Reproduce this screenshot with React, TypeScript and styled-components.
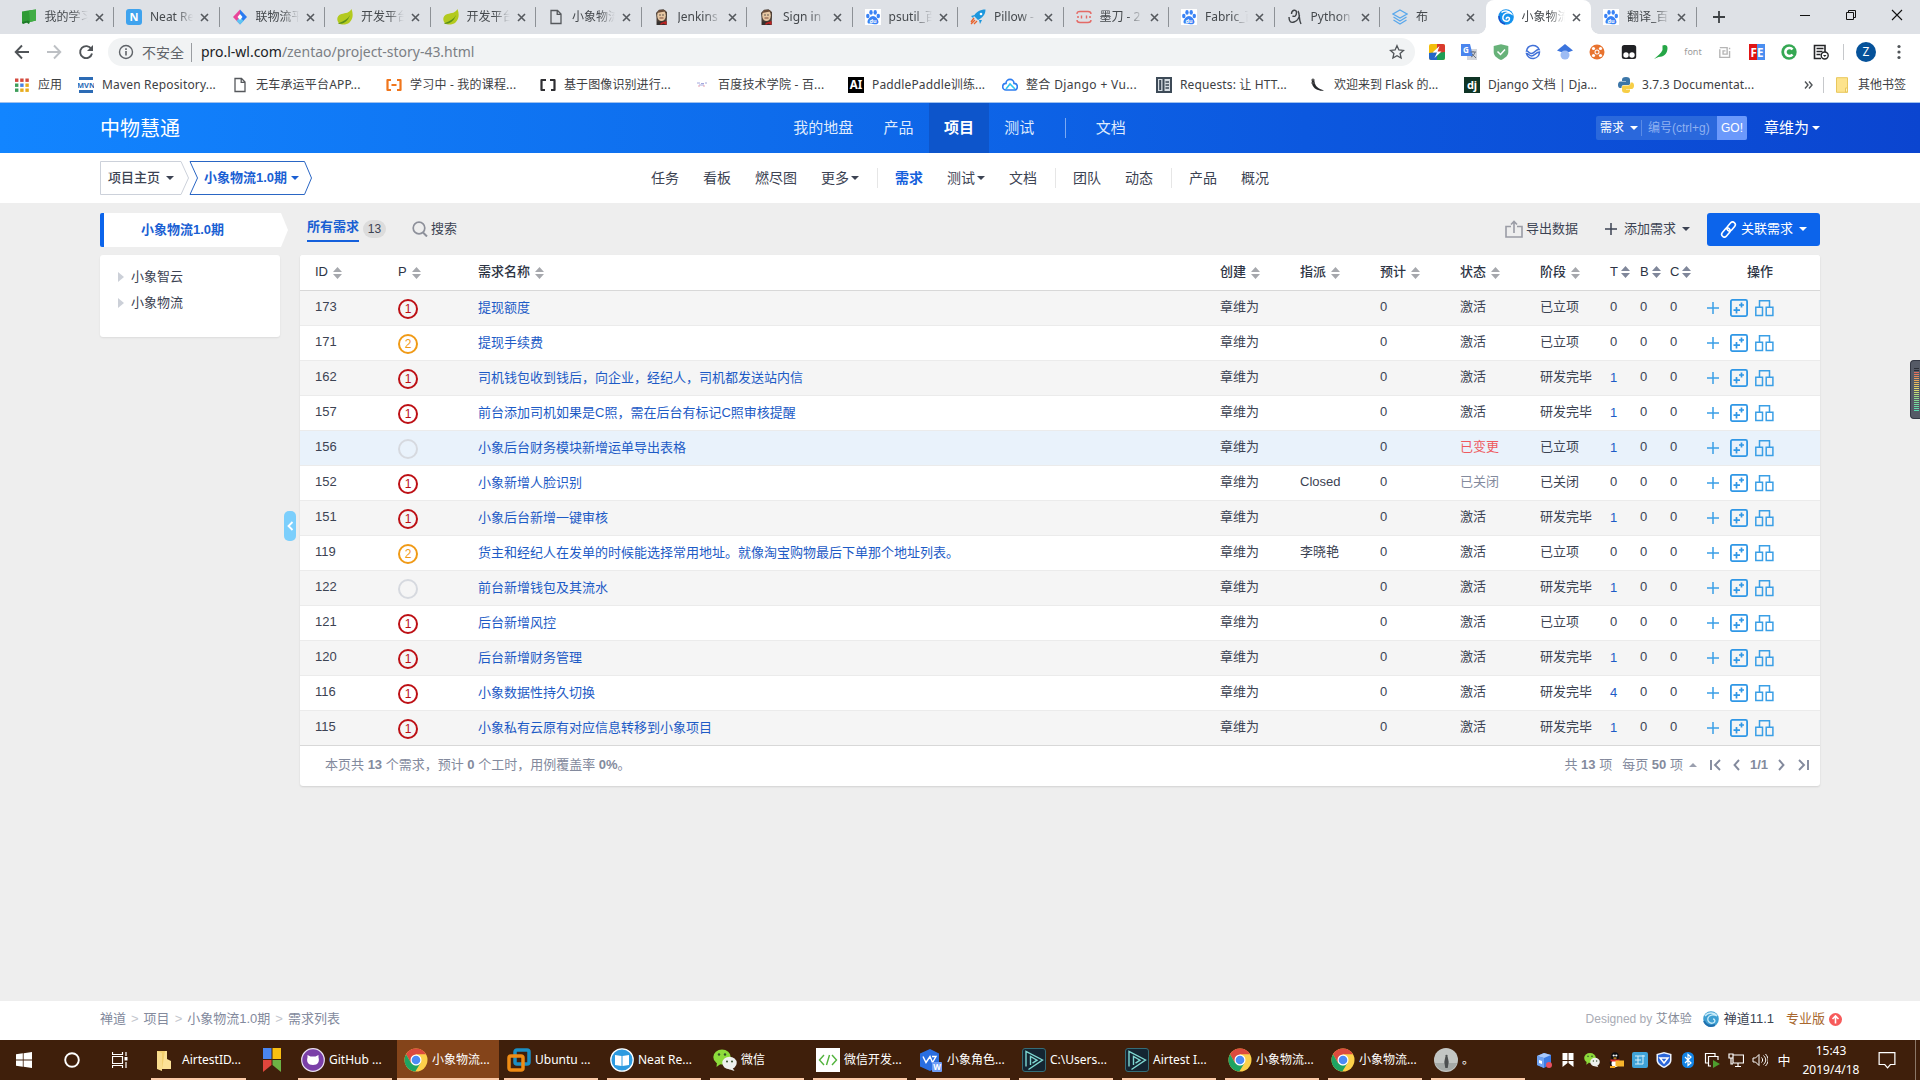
import React from "react";
import styled, { createGlobalStyle, css } from "styled-components";

const APP_FONT = `"Liberation Sans", "Noto Sans CJK SC", sans-serif`;
const UI_FONT = `"Noto Sans", "Noto Sans CJK SC", sans-serif`;

const Global = createGlobalStyle`
  * { box-sizing: border-box; }
  html, body { margin: 0; padding: 0; background: #eeeeee; }
  body { width: 1920px; height: 1080px; overflow: hidden; font: 13px/20px ${APP_FONT}; color: #3c4353; }
`;

const Screen = styled.div`
  position: relative;
  width: 1920px;
  height: 1080px;
  display: flex;
  flex-direction: column;
  background: #eeeeee;
`;

/* ---------- shared bits ---------- */
const Caret = styled.i<{ $up?: boolean; $c?: string; $ml?: number }>`
  flex: none;
  width: 0;
  height: 0;
  margin-left: ${(p) => p.$ml ?? 6}px;
  border: 4px solid transparent;
  ${(p) => (p.$up ? "border-top-width: 0; border-bottom-color:" : "border-bottom-width: 0; border-top-color:")}
    ${(p) => p.$c ?? "#3c4353"};
`;
const Drawing = styled.svg<{ $m?: string }>`
  display: block;
  flex: none;
  margin: ${(p) => p.$m ?? "0"};
`;

/* ---------- browser tabs ---------- */
const TabStrip = styled.div`
  flex: none;
  height: 34px;
  display: flex;
  background: #dee1e6;
  padding-left: 8.5px;
  font: 12px/18px ${UI_FONT};
  color: #45494d;
`;
const Tab = styled.div<{ $active?: boolean; $sep: boolean }>`
  position: relative;
  flex: none;
  width: 105.5px;
  height: 34px;
  display: flex;
  align-items: center;
  padding: 0 9px 0 12px;
  background: ${(p) => (p.$active ? "#fff" : "transparent")};
  border-radius: 8px 8px 0 0;
  ${(p) =>
    p.$sep &&
    css`
      background: linear-gradient(#8d9196, #8d9196) right center / 1px 20px no-repeat;
    `}
  ${(p) =>
    p.$active &&
    css`
      &::before,
      &::after {
        content: "";
        position: absolute;
        bottom: 0;
        width: 8px;
        height: 8px;
      }
      &::before {
        left: -8px;
        background: radial-gradient(circle at 0 0, transparent 7.5px, #fff 8px);
      }
      &::after {
        right: -8px;
        background: radial-gradient(circle at 100% 0, transparent 7.5px, #fff 8px);
      }
    `}
`;
const TabTitle = styled.span`
  width: 44px;
  margin-left: 8px;
  overflow: hidden;
  white-space: nowrap;
  mask-image: linear-gradient(to right, #000 60%, transparent 98%);
`;
const TabClose = styled.span`
  margin-left: 6px;
`;
const NewTab = styled.div`
  flex: none;
  width: 45px;
  display: flex;
  align-items: center;
  justify-content: center;
`;
const WindowButtons = styled.div`
  margin-left: auto;
  display: flex;
  align-items: center;
  gap: 34px;
  padding: 0 17px 5px 0;
`;

/* ---------- browser toolbar ---------- */
const Toolbar = styled.div`
  flex: none;
  height: 36px;
  display: flex;
  align-items: center;
  padding-left: 14px;
  background: #fff;
`;
const NavButtons = styled.div`
  display: flex;
  gap: 16px;
  width: 94px;
`;
const Omnibox = styled.div`
  width: 1307px;
  height: 28px;
  border-radius: 14px;
  background: #f1f3f4;
  display: flex;
  align-items: center;
  padding: 0 10px;
  font: 14px/20px ${UI_FONT};
  color: #5f6368;
`;
const Security = styled.span`
  margin-left: 8px;
  padding-right: 7px;
  border-right: 1px solid #9a9da1;
  line-height: 19px;
`;
const Url = styled.span`
  margin-left: 9px;
  padding-bottom: 1px;
  flex: 1;
  letter-spacing: -0.02px;
  color: #7c8085;
  b { font-weight: 400; color: #202124; }
`;
const Extensions = styled.div`
  display: flex;
  margin-left: 6px;
`;
const Extension = styled.div`
  width: 32px;
  height: 20px;
  display: flex;
  align-items: center;
  justify-content: center;
  font: 9px/12px ${UI_FONT};
  color: #9b9b9b;
`;
const Profile = styled.div`
  width: 20px;
  height: 20px;
  margin: 0 21px 0 12px;
  border-radius: 50%;
  background: #05529a;
  color: #fff;
  font: 12px/20px ${UI_FONT};
  text-align: center;
`;
const VLine = styled.i<{ $h: number; $c: string; $m?: string }>`
  flex: none;
  width: 1px;
  height: ${(p) => p.$h}px;
  background: ${(p) => p.$c};
  margin: ${(p) => p.$m ?? "0"};
`;

/* ---------- bookmarks ---------- */
const Bookmarks = styled.div`
  flex: none;
  height: 33px;
  display: flex;
  align-items: center;
  padding: 0 14px 3px 14px;
  background: #fff;
  border-bottom: 1px solid #9fc1ee;
  font: 12px/18px ${UI_FONT};
  color: #3d4043;
`;
const Bookmark = styled.div<{ $w?: number }>`
  flex: none;
  width: ${(p) => (p.$w ? `${p.$w}px` : "auto")};
  display: flex;
  align-items: center;
  gap: 8px;
  white-space: nowrap;
`;
const BookmarkText = styled.span<{ $ls?: number }>`
  letter-spacing: ${(p) => p.$ls ?? 0}px;
`;

/* ---------- app header ---------- */
const Header = styled.header`
  flex: none;
  height: 50px;
  display: flex;
  align-items: center;
  padding: 0 100px;
  background: linear-gradient(to right, #1285ff 0%, #0e6cec 40%, #0c58df 68%, #0b45d0 100%);
  color: #fff;
`;
const Brand = styled.div`
  width: 678px;
  padding-top: 1px;
  font-size: 20px;
  line-height: 28px;
`;
const MainNav = styled.nav`
  display: flex;
  align-items: center;
`;
const MainNavItem = styled.a<{ $active?: boolean }>`
  height: 50px;
  padding: 0 15.2px;
  font-size: 15px;
  line-height: 49px;
  color: ${(p) => (p.$active ? "#fff" : "#dfeafd")};
  font-weight: ${(p) => (p.$active ? 700 : 400)};
  background: ${(p) => (p.$active ? "#0d55cb" : "transparent")};
`;
const QuickSearch = styled.div`
  margin-left: auto;
  width: 151px;
  height: 24px;
  flex: none;
  display: flex;
  align-items: center;
  border-radius: 2px;
  overflow: hidden;
  background: #2a68dc;
  font-size: 12px;
  padding-left: 4px;
  white-space: nowrap;
`;
const QuickInput = styled.span`
  flex: 1;
  padding-left: 6px;
  color: #8fb1f1;
`;
const GoButton = styled.span`
  width: 30px;
  height: 24px;
  line-height: 25px;
  text-align: center;
  background: #6b99fb;
`;
const User = styled.div`
  margin-left: 17px;
  display: flex;
  align-items: center;
  font-size: 15px;
`;

/* ---------- sub header ---------- */
const SubHeader = styled.div`
  flex: none;
  height: 50px;
  display: flex;
  align-items: center;
  padding-left: 100px;
  background: #fff;
`;
const Crumbs = styled.div`
  display: flex;
  width: 539px;
`;
const Crumb = styled.div<{ $w: number; $pad: number; $active?: boolean }>`
  position: relative;
  width: ${(p) => p.$w}px;
  height: 34px;
  display: flex;
  align-items: center;
  padding: 0 0 1px ${(p) => p.$pad}px;
  font-weight: ${(p) => (p.$active ? 700 : 500)};
  color: ${(p) => (p.$active ? "#1a5fd3" : "#3c4353")};
  svg { position: absolute; left: 0; top: 0; }
`;
const SubNav = styled.nav`
  display: flex;
  align-items: center;
`;
const SubNavItem = styled.a<{ $active?: boolean }>`
  display: flex;
  align-items: center;
  padding: 0 12px;
  font-size: 14px;
  font-weight: ${(p) => (p.$active ? 700 : 400)};
  color: ${(p) => (p.$active ? "#1460dc" : "#3c4353")};
`;

/* ---------- body ---------- */
const Body = styled.div`
  flex: 1;
  display: flex;
  padding: 10px 100px 0;
`;
const Sidebar = styled.aside`
  position: relative;
  width: 200px;
  flex: none;
`;
const SideTitle = styled.div`
  width: 188px;
  height: 34px;
  margin-bottom: 8px;
  border-left: 4px solid #0c64eb;
  border-radius: 2px 0 0 2px;
  background: #fff;
  clip-path: polygon(0 0, 181px 0, 188px 17px, 181px 34px, 0 34px);
  padding-right: 27px;
  text-align: center;
  font-weight: 700;
  line-height: 33px;
  color: #1a5fd3;
`;
const SidePanel = styled.div`
  width: 180px;
  height: 82px;
  padding: 9px 18px;
  border-radius: 3px;
  background: #fff;
  box-shadow: 0 1px 2px rgba(0, 0, 0, 0.08);
`;
const TreeItem = styled.div`
  height: 26px;
  display: flex;
  align-items: center;
  line-height: 20px;
  &::before {
    content: "";
    border: 5px solid transparent;
    border-right-width: 0;
    border-left-width: 6px;
    border-left-color: #ccd0d8;
    margin-right: 7px;
  }
`;
const Toggle = styled.div`
  position: absolute;
  left: 184px;
  top: 298px;
  width: 12px;
  height: 30px;
  border-radius: 5px;
  background: #7ccffc;
  display: flex;
  align-items: center;
  justify-content: center;
`;
const Main = styled.main`
  width: 1520px;
  flex: none;
`;
const Actions = styled.div`
  height: 42px;
  display: flex;
  align-items: flex-start;
  padding-left: 7px;
`;
const AllTab = styled.div`
  height: 29px;
  border-bottom: 2px solid #1460dc;
  font-weight: 700;
  line-height: 28px;
  color: #1a5fd3;
`;
const Count = styled.span`
  margin: 7px 26px 0 4px;
  width: 23px;
  height: 18px;
  border-radius: 9px;
  background: #dcdcdc;
  font-size: 12px;
  line-height: 18px;
  text-align: center;
`;
const Action = styled.div<{ $gap: number; $mr?: number }>`
  height: 32px;
  display: flex;
  align-items: center;
  gap: ${(p) => p.$gap}px;
  margin-right: ${(p) => p.$mr ?? 0}px;
`;
const Spacer = styled.div`
  flex: 1;
`;
const Primary = styled.div`
  width: 113px;
  height: 33px;
  display: flex;
  align-items: center;
  padding: 0 0 1px 13px;
  gap: 4px;
  border-radius: 3px;
  background: #0c64eb;
  color: #fff;
`;

/* ---------- table ---------- */
const Table = styled.div`
  background: #fff;
  border-radius: 3px;
  box-shadow: 0 1px 2px rgba(0, 0, 0, 0.12);
`;
const Row = styled.div<{ $head?: boolean; $bg?: string }>`
  height: ${(p) => (p.$head ? 36 : 35)}px;
  display: grid;
  grid-template-columns: 83px 80px 742px repeat(4, 80px) 70px 30px 30px 37px 1fr;
  align-items: center;
  padding: 0 0 ${(p) => (p.$head ? 1 : 2)}px 15px;
  background: ${(p) => p.$bg ?? "#fff"};
  border-radius: ${(p) => (p.$head ? "3px 3px 0 0" : "0")};
  border-bottom: 1px solid ${(p) => (p.$head ? "#d8d8d8" : "#ebebeb")};
  font-weight: ${(p) => (p.$head ? 500 : 400)};
  color: ${(p) => (p.$head ? "#2d3444" : "#3c4353")};
  &:last-of-type { border-bottom-color: #d8d8d8; }
`;
const Cell = styled.div<{ $c?: string; $down?: number }>`
  display: flex;
  align-items: center;
  white-space: nowrap;
  padding-top: ${(p) => (p.$down ?? 0) * 2}px;
  color: ${(p) => p.$c ?? "inherit"};
`;
const Title = styled.a`
  display: block;
  padding-top: 2px;
  white-space: nowrap;
  color: #1d5bc6;
`;
const Pri = styled.span<{ $c: string }>`
  width: 20px;
  height: 20px;
  margin-top: 4px;
  border: 2px solid ${(p) => p.$c};
  border-radius: 50%;
  color: ${(p) => p.$c};
  font-size: 12px;
  line-height: 16px;
  text-align: center;
`;
const Ops = styled.div`
  display: flex;
  align-items: center;
  padding-top: 2px;
`;
const OpsHead = styled.div`
  padding-left: 40px;
`;
const TableFoot = styled.div`
  height: 40px;
  display: flex;
  align-items: center;
  padding: 0 11px 2px 25px;
  color: #838a9d;
  white-space: pre;
  b { font-weight: 700; }
`;
const Pager = styled.div`
  margin-left: auto;
  display: flex;
  align-items: center;
`;
const PageSize = styled.span`
  margin-left: 10px;
`;

/* ---------- page footer ---------- */
const PageFooter = styled.footer`
  flex: none;
  height: 39px;
  display: flex;
  align-items: center;
  padding: 0 78px 3px 100px;
  background: #fff;
  color: #838a9d;
`;
const Arrow = styled.span`
  width: 17.6px;
  text-align: center;
  color: #c3c6cd;
`;
const Designed = styled.span`
  margin-left: auto;
  margin-right: 11px;
  font-size: 12px;
  color: #a9acb5;
  i { font-style: normal; color: #868b98; }
`;
const Version = styled.span`
  margin: 0 12px 0 5px;
  color: #3c4353;
`;
const Pro = styled.span`
  margin-right: 4px;
  color: #a8672e;
`;

/* ---------- taskbar ---------- */
const Taskbar = styled.div`
  flex: none;
  height: 40px;
  display: flex;
  background: #3f1f0b;
  color: #fff;
  font: 12px/18px ${UI_FONT};
`;
const SystemButton = styled.div<{ $mr?: number }>`
  flex: none;
  width: 48px;
  margin-right: ${(p) => p.$mr ?? 0}px;
  display: flex;
  align-items: center;
  justify-content: center;
`;
const Task = styled.div<{ $w: number; $mr: number; $active?: boolean; $plain?: boolean }>`
  flex: none;
  width: ${(p) => p.$w}px;
  margin-right: ${(p) => p.$mr}px;
  height: 40px;
  display: flex;
  align-items: center;
  gap: 4px;
  padding: ${(p) => (p.$active ? "2px 0 0 7px" : "2px 0 0 3px")};
  border-bottom: 2px solid ${(p) => (p.$plain ? "transparent" : "#fbcaa8")};
  background: ${(p) => (p.$active ? "#84441a" : "transparent")};
  background-clip: padding-box;
  white-space: nowrap;
`;
const Tray = styled.div`
  margin-left: auto;
  display: flex;
  align-items: center;
`;
const TrayIcon = styled.div`
  width: 24px;
  display: flex;
  justify-content: center;
  font-size: 13px;
`;
const Clock = styled.div`
  width: 70px;
  height: 40px;
  padding-top: 1px;
  line-height: 19px;
  text-align: center;
`;
const Meter = styled.div`
  position: absolute;
  right: 0;
  top: 360px;
  width: 10px;
  height: 59px;
  padding: 7px 1px 7px 3px;
  border-radius: 4px 0 0 4px;
  border: 1px solid #343844;
  border-right: 0;
  background: #555a66;
  i {
    display: block;
    height: 100%;
    background: repeating-linear-gradient(to bottom, transparent 0 1px, #555a66 1px 2px),
      linear-gradient(#2b2e36 0 8%, #e2665c 9%, #e9a659 28%, #e2dc6b 50%, #8fd98a 70%, #56dcb0 100%);
  }
`;

/* ---------- icons ---------- */
const Svg = ({ s = 16, w, h, vb, m, children }: any) => (
  <Drawing width={w ?? s} height={h ?? s} viewBox={vb ?? "0 0 16 16"} fill="none" $m={m}>
    {children}
  </Drawing>
);
const T = ({ x = 8, y, size, fill = "#fff", children, b }: any) => (
  <text x={x} y={y} fontSize={size} fill={fill} textAnchor="middle" fontWeight={b ? 700 : 400} fontFamily="Noto Sans">
    {children}
  </text>
);
const Cross = () => (
  <Svg s={9} vb="0 0 9 9"><path d="M1 1l7 7M8 1l-7 7" stroke="#55595e" strokeWidth="1.6" /></Svg>
);
const Doc = () => (
  <Svg><path d="M3 1.5h6.5L13 5v9.5H3zM9.2 1.5V5.3H13" stroke="#55585c" strokeWidth="1.3" /></Svg>
);
const Leaf = () => (
  <Svg><path d="M14.500 0c2 5 1.500 10-2 13.500-3 2.500-8 2.500-10.500 1C-1 11 0 6 4.500 5c4-1 8-1 10-5z" fill="#b3ca1f" /><path d="M1 15c6 0 10-3 12-9-2 4-6 6-11 8z" fill="#5a8f1a" /></Svg>
);
const Butler = () => (
  <Svg><path d="M2.500 16V9L2 4 5 .8 9.500.3 13 3v5l-.5 8z" fill="#4c4038" /><ellipse cx="7.500" cy="6.500" rx="4.300" ry="5.500" fill="#e6c6a2" /><path d="M2.500 4l3-3H11l2 5-2-3.500z" fill="#6b4c38" /><circle cx="6" cy="6" r=".7" fill="#333" /><circle cx="9" cy="6" r=".7" fill="#333" /><path d="M5.500 9h4" stroke="#7c4a3a" /><path d="M3 12.500h9.500V16H3z" fill="#35312f" /><path d="M6.500 14l3-1 3-1v4l-3-1.500-3 1.500z" fill="#c32222" /></Svg>
);
const Paw = () => (
  <Svg><path d="M0 0h16v16H0z" fill="#fff" /><g fill="#3a83f5"><ellipse cx="2.8" cy="7" rx="1.7" ry="2.2" /><ellipse cx="6" cy="3.400" rx="1.700" ry="2.300" /><ellipse cx="10.200" cy="3.400" rx="1.700" ry="2.300" /><ellipse cx="13.300" cy="7" rx="1.700" ry="2.200" /><path d="M8 7c2.500 0 5.500 3.500 5.500 6S10.500 15.500 8 15s-5.500.500-5.500-2S5.500 7 8 7z" /></g><T y="14" size="5.5" b>du</T></Svg>
);
const Swirl = () => (
  <Svg><circle cx="8" cy="8" r="7.800" fill="#1593ee" /><path d="M3.500 3.500C6 1 11 1.500 13 4.500c-3-1.500-7-.5-8 3s2 5.500 5 4.500c2-1 2-3.500 0-3.700-1.500 0-2 1-1.500 2" stroke="#fff" strokeWidth="1.500" /><path d="M1 7c0 4 2 7 6 8" stroke="#1f4ec8" strokeWidth="1.500" /></Svg>
);
const Chrome = () => (
  <Svg s={24} vb="0 0 24 24"><circle cx="12" cy="12" r="11.500" fill="#fcd04a" /><path d="M2 6.300A11.500 11.500 0 0 1 22 6.300H12L7 15z" fill="#dc4b3e" /><path d="M2 6.300a11.500 11.500 0 0 0 9.300 17.200L16.500 15 12 17.500 7 15z" fill="#1ea362" /><circle cx="12" cy="12" r="5.500" fill="#fff" /><circle cx="12" cy="12" r="4.300" fill="#4c8bf5" /></Svg>
);
const Wechat = ({ s = 24 }: { s?: number }) => (
  <Svg s={s} vb="0 0 24 24"><ellipse cx="9" cy="9" rx="8.700" ry="7.500" fill="#8ddb3b" /><path d="M4 14l-.500 5 4-3z" fill="#8ddb3b" /><ellipse cx="16.500" cy="15" rx="7.200" ry="6.200" fill="#eef0ee" /><path d="M19 19l2.500 4-6-2z" fill="#eef0ee" /><g fill="#35502a"><circle cx="6" cy="6.500" r="1.200" /><circle cx="12" cy="6.500" r="1.200" /><circle cx="14" cy="13.500" r="1" /><circle cx="19" cy="13.500" r="1" /></g></Svg>
);
const AirtestIcon = () => (
  <Svg s={24} vb="0 0 24 24"><rect x=".5" y=".5" width="23" height="23" rx="2.500" fill="#142532" stroke="#356d78" /><path d="M6.500 21.500L20.500 12 4 3.500v15M8.500 17V8.500l6.500 3.700-4.500 3" stroke="#7fd8d2" strokeWidth="1.400" /></Svg>
);

const favicons: Record<string, React.ReactNode> = {
  note: <Svg><path d="M1 2.500l6-1 8-1v11l-6 1.500-1 2-2-1.500-5 1z" fill="#2f9b35" /><path d="M8 1.500l7-1v11l-6 1.500z" fill="#41ad45" /><path d="M1 13l6-1.500 1.500 1L7.500 15l-1.500-1.500-4 1.500z" fill="#1e7a28" /></Svg>,
  n: <Svg><rect width="16" height="16" rx="3" fill="#3fa3ee" /><T y="12" size="11" b>N</T></Svg>,
  gem: <Svg><path d="M8 .5L15 8l-7 7.500z" fill="#2a7af0" /><path d="M8 .5L1 8l7 7.500z" fill="#e8459a" /><path d="M8 8l3.500 4L8 15.500 4.500 12z" fill="#5fc4f2" /><path d="M8 5l2.500 3L8 11 5.500 8z" fill="#fff" /></Svg>,
  leaf: <Leaf />,
  doc: <Doc />,
  butler: <Butler />,
  paw: <Paw />,
  rocket: <Svg><path d="M15.500.5C10 .5 6 3 4 7l4 4c4-2 7.500-5 7.500-10.500zM4.500 6L1 7l2 2zM9 11l1 4 2-4z" fill="#1d97dd" /><path d="M4 9l-3 4M5 11l-4 4M7 12l-3 3" stroke="#e9622b" strokeWidth="1.300" /><circle cx="11" cy="5" r="1.300" fill="#fff" /></Svg>,
  modao: <Svg><path d="M1 5c0-2 1-2.500 3-2.500h8c2 0 3 .5 3 2.500M1 11c0 2 1 2.500 3 2.500h8c2 0 3-.5 3-2.500M5.500 6.500v3M10.500 6.500v3M1 8h2M13 8h2" stroke="#e46a66" strokeWidth="1.400" /></Svg>,
  python: <Svg><path d="M4.500 5c0-4.500 5-5 5-1.500s-2 4.500-4 3.500M11 2c2 3 .5 8 3 13M2 8c0 5 2 6 5 5s5-4 5.500-7" stroke="#3f4347" strokeWidth="1.400" /></Svg>,
  layers: <Svg><path d="M8 1l7 4-7 4-7-4zM1.500 8L8 12l6.500-4M1.500 11L8 15l6.500-4" stroke="#5aa8ec" strokeWidth="1.300" /></Svg>,
  swirl: <Swirl />,
};

const tabs: [string, string][] = [
  ["note", "我的学习"], ["n", "Neat Rea"], ["gem", "联物流平"], ["leaf", "开发平台"], ["leaf", "开发平台"],
  ["doc", "小象物流"], ["butler", "Jenkins"], ["butler", "Sign in"], ["paw", "psutil_百"], ["rocket", "Pillow -"],
  ["modao", "墨刀 - 2"], ["paw", "Fabric_百"], ["python", "Python"], ["layers", "布"], ["swirl", "小象物流"], ["paw", "翻译_百"],
];

const extensionIcons: React.ReactNode[] = [
  <Svg><rect width="16" height="16" rx="2" fill="#f3be0b" /><path d="M8 0h6a2 2 0 0 1 2 2v7H8z" fill="#d93a2e" /><path d="M16 8v6a2 2 0 0 1-2 2H7V9z" fill="#1f9d55" /><path d="M8 16H2a2 2 0 0 1-2-2V9l8-1z" fill="#2566c8" /><path d="M10.500 2L3.500 8.500H8L5.500 14l7-6.500H8.500z" fill="#fff" /></Svg>,
  <Svg><rect x="6" y="5" width="10" height="11" fill="#d3d6db" /><path d="M0 0h9l3 12H0z" fill="#4a85ee" /><T x="5" y="9" size="8" b>G</T><path d="M9.500 8h5.500M12 7v1M14 8c-1 3-2 4-4 5M11 10l4 4" stroke="#6a7280" /></Svg>,
  <Svg><path d="M8 .3L15.300 2v6c0 4-4 6.500-7.300 8C4.500 14.500.7 12 .7 8V2z" fill="#67b279" /><path d="M4.500 7.500l3 3 4.500-5" stroke="#fff" strokeWidth="1.500" /></Svg>,
  <Svg><path d="M1.500 7a6.600 6.600 0 0 1 12.600-1.500C10.500 5 9.500 10 6 9.500 4 9.300 3.500 7 1.500 7z" stroke="#4070d8" strokeWidth="1.500" /><path d="M1.500 9.500a6.600 6.600 0 0 0 13-1.500c-3.500 0-5 4-8 4-2 0-3-2.500-5-2.500z" stroke="#4070d8" strokeWidth="1.500" /></Svg>,
  <Svg><path d="M8 0l8 6.500-4 1.500H4L0 6.500z" fill="#3b74dd" /><circle cx="8" cy="11" r="4.500" fill="#9dbcf4" /></Svg>,
  <Svg><circle cx="8" cy="8" r="7.500" fill="#e8732f" /><circle cx="8" cy="8" r="2.500" fill="#fff" /><g fill="#fff"><circle cx="4.500" cy="4.500" r="1.600" /><circle cx="11.500" cy="4.500" r="1.600" /><circle cx="4.500" cy="11.500" r="1.600" /><circle cx="11.500" cy="11.500" r="1.600" /></g><circle cx="8" cy="8" r="1.500" fill="#e8732f" /></Svg>,
  <Svg><rect x=".8" y="1" width="14.400" height="14" rx="2.500" fill="#202124" /><circle cx="5" cy="11" r="2.700" fill="#fff" /><circle cx="11" cy="11" r="2.700" fill="#fff" /></Svg>,
  <Svg><path d="M9.500 1.500c3-1.500 5 0 5 2.500 0 6-4 9-9 9L1 15c3.500-3 7.500-6 8.500-9z" fill="#25a646" /></Svg>,
  "font",
  <Svg s={13}><path d="M1 2h9v8H5V6h3M13 2v2M13 6v8H1V4" stroke="#b5b5b5" strokeWidth="1.700" /></Svg>,
  <Svg><rect width="8" height="16" fill="#e01515" /><rect x="8" width="8" height="16" fill="#4a8ef0" /><T y="12.500" size="11.500" b>FE</T></Svg>,
  <Svg><circle cx="8" cy="8" r="7.700" fill="#35a853" /><path d="M11.500 5.500a4 4 0 1 0 0 5" stroke="#fff" strokeWidth="2.600" /></Svg>,
  <Svg><path d="M12 8V1.500H1.500v13H8M3.500 4.500h7M3.500 7.500h6M3.500 10.500h4" stroke="#252628" strokeWidth="1.600" /><circle cx="11.700" cy="11.500" r="3.500" fill="#fff" stroke="#252628" strokeWidth="1.400" /><path d="M10 11h3.500l-1.700 2z" fill="#252628" /></Svg>,
];

const bookmarks: [React.ReactNode, string, number, number?][] = [
  [<Svg><g>{["#d44a3e", "#d44a3e", "#d44a3e", "#3e9e5a", "#4a82e4", "#e8ac1e", "#3e9e5a", "#e8ac1e", "#e8ac1e"].map((c, i) => <rect key={i} x={1 + (i % 3) * 5.2} y={1.5 + Math.floor(i / 3) * 5} width="3.400" height="3.400" fill={c} />)}</g></Svg>, "应用", 64],
  [<Svg><path d="M1 0h14v3H1zM1 13h14v3H1z" fill="#2c6bb5" /><T y="11" size="7.5" fill="#2c6bb5" b>MVN</T></Svg>, "Maven Repository...", 154, 0.18],
  [<Doc />, "无车承运平台APP...", 154, 0.2],
  [<Svg><path d="M5 3H1.500v10H5M11 3h3.500v10H11M5.500 8h5" stroke="#f0761c" strokeWidth="2.200" strokeLinejoin="round" /></Svg>, "学习中 - 我的课程...", 154, 0.2],
  [<Svg><path d="M6 3H1.500v10H5M10 3h4.500v10H11" stroke="#2f2f33" strokeWidth="2.200" strokeLinejoin="round" /></Svg>, "基于图像识别进行...", 154, 0.1],
  [<Svg><path d="M3 6h3M7 6.500h3M11 6h2M5 8h5" stroke="#a4a8dd" /><path d="M4 9h2M9 9h2" stroke="#e8a4b4" /></Svg>, "百度技术学院 - 百...", 154, 0.2],
  [<Svg><path d="M0 0h16v16H0z" fill="#000" /><T y="12.300" size="11.500" b>AI</T></Svg>, "PaddlePaddle训练...", 154, 0.13],
  [<Svg><path d="M4 13a3.300 3.300 0 0 1 0-6.600 4 4 0 0 1 8 0 3.300 3.300 0 0 1 0 6.600z" stroke="#2e7df0" strokeWidth="1.600" /><path d="M4 12l4-5 5 5" stroke="#2ec5ee" strokeWidth="1.600" /></Svg>, "整合 Django + Vu...", 154, 0.35],
  [<Svg><path d="M0 0h16v16H0z" fill="#3d4a57" /><path d="M2 2h4.500v12H2zM8.500 2H14v12H8.500z" fill="#d6dde3" /><path d="M4.200 3v10" stroke="#3d4a57" strokeWidth="2" /><path d="M9.500 5H13M9.500 8H13M9.500 11H13" stroke="#3d4a57" strokeWidth="1.300" /></Svg>, "Requests: 让 HTT...", 154, 0.13],
  [<Svg><path d="M3 1c-3 4 0 11 5 12 3 1 4 1 6 .5-3-1-8-3-9-7C4.500 4 4 3 3 1z" fill="#26282b" /><path d="M1 3l4 0M1 6l4 0" stroke="#666" /></Svg>, "欢迎来到 Flask 的...", 154],
  [<Svg><path d="M0 0h16v16H0z" fill="#0f3425" /><T y="12" size="11" b>dj</T></Svg>, "Django 文档 | Dja...", 154],
  [<Svg><path d="M8 0c3 0 4 1 4 3v3.500c0 1-1 1.500-2 1.500H6C4 8 3.500 9 3.500 11H2C.5 11 0 9.500 0 8s.5-3.500 2.500-3.500H8V4H4V3c0-2 1-3 4-3z" fill="#3c76a8" /><path d="M8 16c-3 0-4-1-4-3V10c0-1 1-1.500 2-1.500h4c2 0 2.500-1 2.500-3H14c1.500 0 2 1.500 2 3s-.5 3.500-2.500 3.500H8v.5h4v1c0 2-1 2.500-4 2.500z" fill="#f7ce46" /></Svg>, "3.7.3 Documentat...", 154, 0.13],
];

/* ---------- data ---------- */
interface Story {
  id: number; pri: 0 | 1 | 2; title: string; to?: string; status?: string; stage: string; t: number;
}
const DONE = "研发完毕";
const OPEN = "已立项";
const stories: Story[] = [
  { id: 173, pri: 1, title: "提现额度", stage: OPEN, t: 0 },
  { id: 171, pri: 2, title: "提现手续费", stage: OPEN, t: 0 },
  { id: 162, pri: 1, title: "司机钱包收到钱后，向企业，经纪人，司机都发送站内信", stage: DONE, t: 1 },
  { id: 157, pri: 1, title: "前台添加司机如果是C照，需在后台有标记C照审核提醒", stage: DONE, t: 1 },
  { id: 156, pri: 0, title: "小象后台财务模块新增运单导出表格", status: "已变更", stage: OPEN, t: 1 },
  { id: 152, pri: 1, title: "小象新增人脸识别", to: "Closed", status: "已关闭", stage: "已关闭", t: 0 },
  { id: 151, pri: 1, title: "小象后台新增一键审核", stage: DONE, t: 1 },
  { id: 119, pri: 2, title: "货主和经纪人在发单的时候能选择常用地址。就像淘宝购物最后下单那个地址列表。", to: "李晓艳", stage: OPEN, t: 0 },
  { id: 122, pri: 0, title: "前台新增钱包及其流水", stage: DONE, t: 1 },
  { id: 121, pri: 1, title: "后台新增风控", stage: OPEN, t: 0 },
  { id: 120, pri: 1, title: "后台新增财务管理", stage: DONE, t: 1 },
  { id: 116, pri: 1, title: "小象数据性持久切换", stage: DONE, t: 4 },
  { id: 115, pri: 1, title: "小象私有云原有对应信息转移到小象项目", stage: DONE, t: 1 },
];
const priColor = ["#d6d9df", "#bd1015", "#f09a16"];
const statusColor: Record<string, string> = { 已变更: "#ee5a5f", 已关闭: "#838a9d" };

const Sort = ({ dark }: { dark?: boolean }) => (
  <Svg w={9} h={12} vb="0 0 9 12" m={dark ? "0 0 0 3px" : "1px 0 0 5px"}>
    <path d="M4.500 0L9 5H0zM4.500 12L0 7h9z" fill={dark ? "#80879a" : "#a6a8ad"} />
  </Svg>
);
const PlusIcon = ({ c, s = 12 }: { c: string; s?: number }) => (
  <Svg s={s} vb="0 0 12 12"><path d="M6 0v12M0 6h12" stroke={c} strokeWidth="1.500" /></Svg>
);
const RowOps = () => (
  <Ops>
    <PlusIcon c="#3a9fe6" />
    <Svg s={18} vb="0 0 18 18" m="0 0 0 11px">
      <rect x=".9" y=".9" width="16.200" height="16.200" rx="1.500" stroke="#2f97e6" strokeWidth="1.800" />
      <path d="M11.500 3.500v5M9 6h5M6.500 8v6.500M3.500 11.200H10" stroke="#2f97e6" strokeWidth="1.700" />
    </Svg>
    <Svg w={19} h={18} vb="0 0 19 18" m="0 0 0 7px">
      <path d="M4.500 8V1.700h10V8M.8 8.300h6.700v8.200H.8zM11.200 8.300h6.700v8.200h-6.700z" stroke="#3a9fe6" strokeWidth="1.500" />
    </Svg>
  </Ops>
);

const tasks: [React.ReactNode, string, number, number][] = [
  [<Svg s={24} vb="0 0 24 24"><path d="M3 3h8v18H3z" fill="#f2cf6f" /><path d="M11 3h2v8l4 2v8H8z" fill="#fbe196" /><path d="M3 3l5 2v18l-5-2z" fill="#f8dc8d" /></Svg>, "AirtestID...", 95, 11],
  [<Svg s={24} vb="0 0 24 24"><path d="M3 0h8.500v11H3z" fill="#4a86f0" /><path d="M12.500 0H21v11h-8.500z" fill="#f8bf12" /><path d="M3 12h8.500v5L3 24z" fill="#e0463c" /><path d="M12.500 12H21v12l-8.500-7z" fill="#6cb244" /></Svg>, "", 41, 0],
  [<Svg s={24} vb="0 0 24 24"><circle cx="12" cy="12" r="11.300" fill="#7b3fa8" stroke="#e9e0f2" strokeWidth="1.200" /><path d="M6.500 9.500V7l3 1.500h5l3-1.500v2.500c1.200 4-.5 7.500-5.500 7.500s-6.700-3.500-5.500-7.500z" fill="#fff" /></Svg>, "GitHub ...", 94, 5],
  [<Chrome />, "小象物流...", 102, 5],
  [<Svg s={24} vb="0 0 24 24"><rect x="8" y="2" width="14" height="14" rx="2" stroke="#1c8fc4" strokeWidth="3.500" /><rect x="2" y="8" width="14" height="14" rx="2" stroke="#f08c14" strokeWidth="3.500" /></Svg>, "Ubuntu ...", 94, 9],
  [<Svg s={24} vb="0 0 24 24"><circle cx="12" cy="12" r="11.200" fill="#2d9be0" stroke="#fff" strokeWidth="1.300" /><path d="M5 7l6.500 1v10L5 17zM12.500 8L19 7v10l-6.500 1z" fill="#fff" /></Svg>, "Neat Re...", 94, 9],
  [<Wechat />, "微信", 94, 9],
  [<Svg s={24} vb="0 0 24 24"><path d="M0 0h24v24H0z" fill="#fff" /><path d="M8 7l-4.500 5L8 17M16 7l4.500 5-4.500 5M13.500 7l-3 10" stroke="#52b33c" strokeWidth="1.400" /></Svg>, "微信开发...", 94, 9],
  [<Svg s={24} vb="0 0 24 24"><path d="M11 1l9 4.500v13L11 23l-10-4.500v-13z" fill="#2a6ee0" /><path d="M4 8.500l3 6 4-6 2.500 6 3.500-6h-4" stroke="#fff" strokeWidth="1.400" /><rect x="13" y="14" width="10" height="10" rx="1" fill="#6f9df5" /><T x="18" y="22" size="8" b>W</T></Svg>, "小象角色...", 94, 9],
  [<AirtestIcon />, "C:\\Users...", 94, 9],
  [<AirtestIcon />, "Airtest I...", 94, 9],
  [<Chrome />, "小象物流...", 94, 9],
  [<Chrome />, "小象物流...", 94, 9],
  [<Svg s={24} vb="0 0 24 24"><circle cx="12" cy="12" r="12" fill="#c3c6c4" /><path d="M.8 15h22.400A12 12 0 0 1 .8 15z" fill="#a5a9a7" /><path d="M11.300 9h2.400l1 5-1 6h-2.400l-1-6z" fill="#4c4f50" /><circle cx="12.500" cy="8" r="1.200" fill="#4c4f50" /></Svg>, "。", 94, 0],
];

const trayIcons: React.ReactNode[] = [
  <Svg><path d="M1 4l7-3 7 2v9l-7 4-7-3z" fill="#3c7be4" /><path d="M1 4l7-3 7 2-7 3z" fill="#a9c9fb" /><path d="M1 4l7 2v10l-7-3z" fill="#6fa2f2" /><path d="M3 8l3 1v3l-3-1z" fill="#fff" /><circle cx="13" cy="13" r="3" fill="#e9505f" /></Svg>,
  <Svg><path d="M2.500 1h5v7h-5zM8.500 1h5v7h-5zM2.500 9h5v2l-5 4zM8.500 9h5v6l-5-4z" fill="#fff" /></Svg>,
  <Wechat s={16} />,
  <Svg><ellipse cx="7" cy="4.500" rx="3.800" ry="4.300" fill="#0c0d10" /><ellipse cx="7" cy="11" rx="5.300" ry="4.500" fill="#0c0d10" /><ellipse cx="7" cy="11.500" rx="3.500" ry="3.700" fill="#fff" /><path d="M2.500 7.500h9v2h-9z" fill="#e02d2d" /><path d="M2 14h5v2H2z" fill="#f3a51d" /><rect x="7.500" y="8.500" width="8.500" height="6" fill="#f8b52c" /><path d="M5.500 5.500h3v1.200h-3z" fill="#f3a51d" /><circle cx="5.700" cy="3.500" r="1.100" fill="#fff" /><circle cx="8.300" cy="3.500" r="1.100" fill="#fff" /></Svg>,
  <Svg><rect width="16" height="16" rx="2" fill="#3fa3d9" /><path d="M3 4h10M3 8h6M11 3v9M3 12h8M6 4v8" stroke="#d6f0fb" /></Svg>,
  <Svg><path d="M8 0l7.500 2v6c0 4-4 6.500-7.500 8C4.500 14.500.5 12 .5 8V2z" fill="#eef4ff" /><path d="M8 1.500l6 1.500v5c0 3-3 5-6 6.500C5 13 2 11 2 8V3z" fill="#2b66d9" /><path d="M4 6h8l-4 5z" stroke="#fff" strokeWidth="1.500" /></Svg>,
  <Svg><rect x="2" width="12" height="16" rx="5.500" fill="#1283e4" /><path d="M5 5l6 6-3 2.500v-11L11 5l-6 6" stroke="#fff" strokeWidth="1.200" /></Svg>,
  <Svg><path d="M4 11H1.500V1.500H11V4M7 14H4.500V4.500H14V8" stroke="#fff" strokeWidth="1.200" /><path d="M9 8l7 4-7 4z" fill="#4d9e2e" /></Svg>,
  <Svg><path d="M5 3h10.500v8H5zM10 11v3M7 14.500h6M1 2h4v4H1zM3 6v6h2" stroke="#fff" strokeWidth="1.200" /></Svg>,
  <Svg><path d="M1 6h2.500L7 2.500v11L3.500 10H1zM9.500 5.500c1.500 1.500 1.500 3.500 0 5M11.500 3.500c3 3 3 6 0 9M13.500 2c3.500 4 3.500 8 0 12" stroke="#fff" /></Svg>,
  "中",
];

const Chevron = ({ d, w, m }: { d: string; w: number; m: string }) => (
  <Svg w={w} h={12} vb={`0 0 ${w} 12`} m={m}><path d={d} stroke="#838a9d" strokeWidth="1.900" /></Svg>
);

export default function App() {
  return (
    <>
      <Global />
      <Screen>
        <TabStrip>
          {tabs.map(([icon, title], i) => (
            <Tab key={i} $active={i === 14} $sep={i !== 14 && i !== 13}>
              {favicons[icon]}
              <TabTitle>{title}</TabTitle>
              <TabClose><Cross /></TabClose>
            </Tab>
          ))}
          <NewTab><Svg s={12} vb="0 0 12 12"><path d="M6 0v12M0 6h12" stroke="#3c4043" strokeWidth="1.800" /></Svg></NewTab>
          <WindowButtons>
            <Svg w={12} h={12} vb="0 0 12 12"><path d="M1 6.500h10" stroke="#111" /></Svg>
            <Svg w={12} h={12} vb="0 0 12 12"><path d="M1.500 3.500h7v7h-7zM3.500 3V1.500h7v7H9" stroke="#111" /></Svg>
            <Svg w={12} h={12} vb="0 0 12 12"><path d="M1 1l10 10M11 1L1 11" stroke="#111" strokeWidth="1.100" /></Svg>
          </WindowButtons>
        </TabStrip>

        <Toolbar>
          <NavButtons>
            <Svg><path d="M15 8H2M8 1.500L1.700 8 8 14.500" stroke="#505458" strokeWidth="1.900" /></Svg>
            <Svg><path d="M1 8h13M8 1.500L14.300 8 8 14.500" stroke="#bdc0c4" strokeWidth="1.900" /></Svg>
            <Svg><path d="M13.300 5A6 6 0 1 0 14 9.500" stroke="#505458" strokeWidth="1.900" /><path d="M15 1v6H9z" fill="#505458" /></Svg>
          </NavButtons>
          <Omnibox>
            <Svg><circle cx="8" cy="8" r="6.500" stroke="#5f6368" strokeWidth="1.400" /><path d="M8 7v4.500M8 4.300v1.600" stroke="#5f6368" strokeWidth="1.600" /></Svg>
            <Security>不安全</Security>
            <Url><b>pro.l-wl.com</b>/zentao/project-story-43.html</Url>
            <Svg><path d="M8 1.700l1.900 4.200 4.600.5-3.400 3.100 1 4.500L8 11.700 3.900 14l1-4.500L1.500 6.400l4.600-.5z" stroke="#505458" strokeWidth="1.300" /></Svg>
          </Omnibox>
          <Extensions>
            {extensionIcons.map((icon, i) => <Extension key={i}>{icon}</Extension>)}
          </Extensions>
          <VLine $h={16} $c="#c6c8cb" $m="0 0 0 6px" />
          <Profile>Z</Profile>
          <Svg w={4} h={16} vb="0 0 4 16"><g fill="#505458"><circle cx="2" cy="2.500" r="1.600" /><circle cx="2" cy="8" r="1.600" /><circle cx="2" cy="13.500" r="1.600" /></g></Svg>
        </Toolbar>

        <Bookmarks>
          {bookmarks.map(([icon, text, w, ls], i) => (
            <Bookmark key={i} $w={w}>{icon}<BookmarkText $ls={ls}>{text}</BookmarkText></Bookmark>
          ))}
          <Spacer />
          <Svg w={9} h={8} vb="0 0 9 8"><path d="M1 .5L4 4 1 7.500M5 .5L8 4 5 7.500" stroke="#505458" strokeWidth="1.400" /></Svg>
          <VLine $h={16} $c="#c6c8cb" $m="0 10px" />
          <Bookmark>
            <Svg><path d="M2.500.7h11v14.600h-11z" fill="#fde38c" stroke="#e9c75c" /><path d="M11.500 11h2v4h-2z" fill="#fff3c0" stroke="#e9c75c" /></Svg>
            <BookmarkText>其他书签</BookmarkText>
          </Bookmark>
        </Bookmarks>

        <Header>
          <Brand>中物慧通</Brand>
          <MainNav>
            <MainNavItem>我的地盘</MainNavItem>
            <MainNavItem>产品</MainNavItem>
            <MainNavItem $active>项目</MainNavItem>
            <MainNavItem>测试</MainNavItem>
            <VLine $h={20} $c="#7ba9f3" $m="0 15px" />
            <MainNavItem>文档</MainNavItem>
          </MainNav>
          <QuickSearch>
            需求<Caret $c="#fff" />
            <VLine $h={16} $c="#5a8be6" $m="0 0 0 3px" />
            <QuickInput>编号(ctrl+g)</QuickInput>
            <GoButton>GO!</GoButton>
          </QuickSearch>
          <User>章维为<Caret $c="#fff" $ml={3} /></User>
        </Header>

        <SubHeader>
          <Crumbs>
            <Crumb $w={89} $pad={8}>
              <Svg w={90} h={34} vb="0 0 90 34"><path d="M.5.5h80.500l7.500 16.500-7.500 16.500H.5z" stroke="#ccd1da" /></Svg>
              项目主页<Caret />
            </Crumb>
            <Crumb $w={124} $pad={15} $active>
              <Svg w={124} h={34} vb="0 0 124 34"><path d="M1 .5h114.500l7 16.500-7 16.500H1L8.500 17z" stroke="#2a66c4" /></Svg>
              小象物流1.0期<Caret $c="#1a5fd3" $ml={4} />
            </Crumb>
          </Crumbs>
          <SubNav>
            <SubNavItem>任务</SubNavItem>
            <SubNavItem>看板</SubNavItem>
            <SubNavItem>燃尽图</SubNavItem>
            <SubNavItem>更多<Caret $ml={2} /></SubNavItem>
            <VLine $h={20} $c="#e6e6e6" $m="0 5.5px" />
            <SubNavItem $active>需求</SubNavItem>
            <SubNavItem>测试<Caret $ml={2} /></SubNavItem>
            <SubNavItem>文档</SubNavItem>
            <VLine $h={20} $c="#e6e6e6" $m="0 5.5px" />
            <SubNavItem>团队</SubNavItem>
            <SubNavItem>动态</SubNavItem>
            <VLine $h={20} $c="#e6e6e6" $m="0 5.5px" />
            <SubNavItem>产品</SubNavItem>
            <SubNavItem>概况</SubNavItem>
          </SubNav>
        </SubHeader>

        <Body>
          <Sidebar>
            <SideTitle>小象物流1.0期</SideTitle>
            <SidePanel>
              <TreeItem>小象智云</TreeItem>
              <TreeItem>小象物流</TreeItem>
            </SidePanel>
            <Toggle><Svg w={7} h={10} vb="0 0 7 10"><path d="M5.500 1L1.500 5l4 4" stroke="#fff" strokeWidth="1.800" /></Svg></Toggle>
          </Sidebar>

          <Main>
            <Actions>
              <AllTab>所有需求</AllTab>
              <Count>13</Count>
              <Action $gap={3}>
                <Svg><circle cx="7" cy="7" r="5.800" stroke="#8d909a" strokeWidth="1.700" /><path d="M11 11.500l4 4" stroke="#8d909a" strokeWidth="2" /></Svg>
                搜索
              </Action>
              <Spacer />
              <Action $gap={3} $mr={27}>
                <Svg s={18} vb="0 0 18 18"><path d="M6 6.500H1v10.500h16V6.500h-5M9 13V2M6 4.500L9 1.500l3 3" stroke="#9a9ca5" strokeWidth="1.600" /></Svg>
                导出数据
              </Action>
              <Action $gap={7} $mr={17}>
                <PlusIcon c="#3c4353" />
                <Cell>添加需求<Caret /></Cell>
              </Action>
              <Primary>
                <Svg s={17} vb="0 0 17 17"><g transform="rotate(-50 8.500 8.500)" stroke="#fff" strokeWidth="1.600"><rect x="-.5" y="5.800" width="10" height="5.400" rx="2.700" /><rect x="7.500" y="5.800" width="10" height="5.400" rx="2.700" /></g></Svg>
                关联需求<Caret $c="#fff" $ml={2} />
              </Primary>
            </Actions>

            <Table>
              <Row as="header" $head>
                {["ID", "P", "需求名称", "创建", "指派", "预计", "状态", "阶段"].map((h) => (
                  <Cell key={h}>{h}<Sort /></Cell>
                ))}
                {["T", "B", "C"].map((h) => <Cell key={h}>{h}<Sort dark /></Cell>)}
                <OpsHead>操作</OpsHead>
              </Row>
              {stories.map((s, i) => (
                <Row key={s.id} $bg={s.id === 156 ? "#e9f2fb" : i % 2 ? "#fff" : "#f5f5f5"}>
                  <Cell>{s.id}</Cell>
                  <Cell><Pri $c={priColor[s.pri]}>{s.pri || ""}</Pri></Cell>
                  <Title>{s.title}</Title>
                  <Cell>章维为</Cell>
                  <Cell>{s.to}</Cell>
                  <Cell>0</Cell>
                  <Cell $c={statusColor[s.status ?? ""]}>{s.status ?? "激活"}</Cell>
                  <Cell>{s.stage}</Cell>
                  <Cell $c={s.t ? "#1d5bc6" : undefined} $down={s.t ? 1 : 0}>{s.t}</Cell>
                  <Cell>0</Cell>
                  <Cell>0</Cell>
                  <RowOps />
                </Row>
              ))}
              <TableFoot as="footer">
                <span>本页共 <b>13</b> 个需求，预计 <b>0</b> 个工时，用例覆盖率 <b>0%</b>。</span>
                <Pager>
                  <span>共 <b>13</b> 项</span>
                  <PageSize>每页 <b>50</b> 项</PageSize>
                  <Caret $up $c="#9a9fae" $ml={6} />
                  <Chevron w={11} m="0 0 0 13px" d="M1 1v10M10 1L5 6l5 5" />
                  <Chevron w={7} m="0 10px 0 12px" d="M6 1L1.500 6 6 11" />
                  <b>1/1</b>
                  <Chevron w={7} m="0 13px 0 10px" d="M1 1l4.500 5L1 11" />
                  <Chevron w={11} m="0" d="M10 1v10M1 1l5 5-5 5" />
                </Pager>
              </TableFoot>
            </Table>
          </Main>
        </Body>

        <PageFooter>
          禅道<Arrow>&gt;</Arrow>项目<Arrow>&gt;</Arrow>小象物流1.0期<Arrow>&gt;</Arrow>需求列表
          <Designed>Designed by <i>艾体验</i></Designed>
          <Svg><circle cx="8" cy="8" r="7.800" fill="#3e9fd2" /><path d="M2 5c3-4 9-4 12 0-4-2-8-1-9 2s2 6 5 5 2-4 0-4" stroke="#c9ebf8" strokeWidth="1.300" /><path d="M1 10c2 4 6 6 11 4" stroke="#1f6fae" strokeWidth="2" /></Svg>
          <Version>禅道11.1</Version>
          <Pro>专业版</Pro>
          <Svg s={13} vb="0 0 13 13"><circle cx="6.500" cy="6.500" r="6.500" fill="#f75b5b" /><path d="M6.500 10.500V3.500M3.500 6l3-3 3 3" stroke="#fff" strokeWidth="1.600" /></Svg>
        </PageFooter>

        <Taskbar>
          <SystemButton><Svg><path d="M0 2.300l6.800-1v6.300H0zM7.600 1.200L16 0v7.600H7.600zM0 8.400h6.800v6.300l-6.800-1zM7.600 8.400H16V16l-8.400-1.200z" fill="#fff" /></Svg></SystemButton>
          <SystemButton><Svg><circle cx="8" cy="8" r="6.800" stroke="#fff" strokeWidth="1.900" /></Svg></SystemButton>
          <SystemButton $mr={7}><Svg><path d="M.5 0v2.500h10V0M.5 16v-2.500h10V16M.5 4.500h10v7H.5zM14 0v4M14 10v6" stroke="#fff" strokeWidth="1.200" /><path d="M12.500 5h3v3.500h-3z" fill="#fff" /></Svg></SystemButton>
          {tasks.map(([icon, text, w, mr], i) => (
            <Task key={i} $w={w} $mr={mr} $active={i === 3} $plain={!text}>{icon}{text}</Task>
          ))}
          <Tray>
            {trayIcons.map((icon, i) => <TrayIcon key={i}>{icon}</TrayIcon>)}
            <Clock>15:43<br />2019/4/18</Clock>
            <Svg s={18} vb="0 0 16 16" m="0 19px 0 12px"><path d="M1 1.500h14v10.500h-4L8.500 15l-2.500-3H1z" stroke="#fff" strokeWidth="1.100" /></Svg>
            <VLine $h={40} $c="#8b7767" $m="0 4px 0 0" />
          </Tray>
        </Taskbar>

        <Meter><i /></Meter>
      </Screen>
    </>
  );
}
